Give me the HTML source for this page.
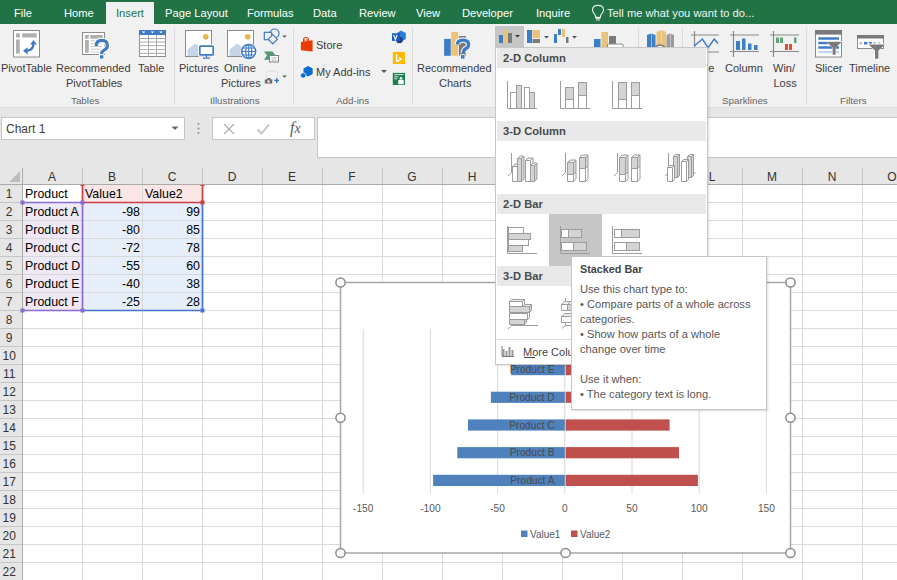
<!DOCTYPE html>
<html><head><meta charset="utf-8">
<style>
*{margin:0;padding:0;box-sizing:border-box}
html,body{width:897px;height:580px;overflow:hidden;background:#fff;font-family:"Liberation Sans",sans-serif}
.a{position:absolute;white-space:nowrap}
#tabs{position:absolute;left:0;top:0;width:897px;height:24px;background:#217346}
.tab{position:absolute;top:6px;font-size:11.2px;line-height:14px;color:#fff}
#ribbon{position:absolute;left:0;top:24px;width:897px;height:83px;background:#f1f1f1}
.rt{position:absolute;font-size:11px;line-height:14px;color:#3c3c3c;white-space:nowrap}
.gl{position:absolute;top:94px;font-size:9.8px;line-height:13px;color:#666;white-space:nowrap}
.sep{position:absolute;top:28px;width:1px;height:76px;background:#dadada}
#fbar{position:absolute;left:0;top:107px;width:897px;height:61px;background:#e6e6e6}
.cell{position:absolute;font-size:12px;line-height:17px;color:#000;white-space:nowrap}
</style></head><body>
<div id="tabs">
 <div style="position:absolute;left:106px;top:2px;width:48px;height:22px;background:#f1f1f1"></div>
 <div class="tab" style="left:14px">File</div>
 <div class="tab" style="left:64px">Home</div>
 <div class="tab" style="left:116px;color:#217346">Insert</div>
 <div class="tab" style="left:165px">Page Layout</div>
 <div class="tab" style="left:247px">Formulas</div>
 <div class="tab" style="left:313px">Data</div>
 <div class="tab" style="left:359px">Review</div>
 <div class="tab" style="left:416px">View</div>
 <div class="tab" style="left:462px">Developer</div>
 <div class="tab" style="left:536px">Inquire</div>
 <svg class="a" style="left:591px;top:4px" width="14" height="18" viewBox="0 0 14 18"><path d="M4.8 13.5 q-0.2 -2.5 -1.8 -4.2 q-1.5 -1.7 -1.5 -3.6 q0 -4.3 5.5 -4.3 q5.5 0 5.5 4.3 q0 1.9 -1.5 3.6 q-1.6 1.7 -1.8 4.2z" fill="none" stroke="#e8efe9" stroke-width="1.1"/><rect x="4.6" y="12.8" width="4.8" height="2" fill="#fff"/><path d="M5.2 16h3.6" stroke="#e8efe9" stroke-width="1"/></svg>
 <div class="tab" style="left:607px;color:#eef4f0">Tell me what you want to do...</div>
</div>
<div id="ribbon"></div>
<!-- separators -->
<div class="sep" style="left:174px"></div>
<div class="sep" style="left:293px"></div>
<div class="sep" style="left:412px"></div>
<div class="sep" style="left:638px"></div>
<div class="sep" style="left:682px"></div>
<div class="sep" style="left:806px"></div>
<!-- Tables group -->
<svg class="a" style="left:12px;top:29px" width="30" height="30" viewBox="0 0 30 30">
 <rect x="1.5" y="1.5" width="26" height="26.5" fill="#fff" stroke="#8c8c8c"/>
 <rect x="4" y="4.3" width="3.8" height="4.2" fill="#b0b0b0"/>
 <rect x="10.2" y="4.3" width="14.5" height="4.2" fill="#b0b0b0"/>
 <rect x="4" y="10.4" width="3.8" height="14.2" fill="#b0b0b0"/>
 <path d="M14 21.8 q7.5 0 7.5 -8" fill="none" stroke="#3e7bc4" stroke-width="2.3"/>
 <path d="M21.5 11 l-3.4 4.6 h6.8z" fill="#3e7bc4"/>
 <path d="M11 21.8 l4.6 -3.6 v7.2z" fill="#3e7bc4"/>
</svg>
<svg class="a" style="left:76px;top:26px" width="40" height="36" viewBox="76 26 40 36">
 <rect x="82.5" y="32.5" width="22" height="22" fill="#fff" stroke="#8c8c8c"/>
 <rect x="85" y="35" width="3.8" height="3.7" fill="#b0b0b0"/>
 <rect x="90.2" y="35" width="12.5" height="3.7" fill="#b0b0b0"/>
 <rect x="85" y="40" width="3.8" height="12.7" fill="#b0b0b0"/>
 <path d="M91 40.8h11M91 43.6h11M91 46.4h11M91 49.2h11M91 52h11" stroke="#c8c8c8" stroke-width="1"/>
 <path d="M96.2 46 q0 -5.6 5.6 -5.6 q5.6 0 5.6 5 q0 2.8 -2.6 4.2 q-3.2 1.6 -3.2 4.4" fill="none" stroke="#fff" stroke-width="5.5"/>
 <rect x="98.9" y="54.2" width="5.4" height="5.4" fill="#fff"/>
 <path d="M96.2 46 q0 -5.6 5.6 -5.6 q5.6 0 5.6 5 q0 2.8 -2.6 4.2 q-3.2 1.6 -3.2 4.4" fill="none" stroke="#3e7bc4" stroke-width="3.2"/>
 <rect x="100" y="55.2" width="3.4" height="3.4" fill="#3e7bc4"/>
</svg>
<svg class="a" style="left:132px;top:26px" width="40" height="36" viewBox="132 26 40 36">
 <rect x="139.5" y="30.5" width="26" height="26" fill="#fff" stroke="#8c8c8c"/>
 <rect x="139" y="30" width="27" height="5" fill="#3e7bc4"/>
 <path d="M141.8 31.4h3.6l-1.8 1.8zM150.7 31.4h3.6l-1.8 1.8zM159.2 31.4h3.6l-1.8 1.8z" fill="#fff"/>
 <path d="M139 38.5h27M139 42h27M139 45.7h27M139 49.6h27M139 53.3h27M148.5 35v22M156.5 35v22" stroke="#a8a8a8" stroke-width="1"/>
</svg>
<div class="rt" style="left:1px;top:61px">PivotTable</div>
<div class="rt" style="left:56px;top:61px">Recommended</div>
<div class="rt" style="left:66px;top:76px">PivotTables</div>
<div class="rt" style="left:138px;top:61px">Table</div>
<div class="gl" style="left:71px">Tables</div>
<!-- Illustrations -->
<svg class="a" style="left:180px;top:26px" width="40" height="36" viewBox="180 26 40 36">
 <rect x="185.5" y="30.5" width="26" height="26" fill="#fff" stroke="#8c8c8c"/>
 <circle cx="205.8" cy="36.7" r="2.8" fill="#e8b44c"/>
 <path d="M187.5 56 V49.8 L194.3 44 H196.2 L200 47.5 V56z" fill="#c5d6ea"/>
 <rect x="198" y="44.3" width="17" height="12.4" rx="1.5" fill="#fff"/>
 <rect x="199.8" y="46.1" width="13.4" height="8.8" rx="1" fill="#fff" stroke="#3e7bc4" stroke-width="1.7"/>
 <path d="M206.5 55v2.3M203 58.2h7" stroke="#3e7bc4" stroke-width="1.3"/>
</svg>
<svg class="a" style="left:222px;top:26px" width="40" height="36" viewBox="222 26 40 36">
 <rect x="227.5" y="30.5" width="26" height="26" fill="#fff" stroke="#8c8c8c"/>
 <circle cx="247.8" cy="36.7" r="2.8" fill="#e8b44c"/>
 <path d="M229.5 56 V49.8 L236.3 44 H238.2 L242 47.5 V56z" fill="#c5d6ea"/>
 <circle cx="248.7" cy="51.5" r="8.3" fill="#fff"/>
 <circle cx="248.7" cy="51.5" r="7" fill="#fff" stroke="#3e7bc4" stroke-width="1.5"/>
 <ellipse cx="248.7" cy="51.5" rx="3" ry="7" fill="none" stroke="#3e7bc4" stroke-width="1.2"/>
 <path d="M241.7 51.5h14M242.6 48h12.2M242.6 55h12.2M248.7 44.5v14" stroke="#3e7bc4" stroke-width="1.1"/>
</svg>
<svg class="a" style="left:260px;top:26px" width="32" height="60" viewBox="260 26 32 60">
 <circle cx="274.6" cy="33.4" r="4.4" fill="none" stroke="#3e7bc4" stroke-width="1.2"/>
 <rect x="264.3" y="32.3" width="7.4" height="7.4" fill="#f1f1f1" stroke="#3e7bc4" stroke-width="1.2"/>
 <path d="M272.8 34.6 l4.6 4.6 l-4.6 4.6 l-4.6 -4.6z" fill="#f1f1f1" stroke="#3e7bc4" stroke-width="1.2"/>
 <path d="M282.2 35.5h4.6l-2.3 2.3z" fill="#555"/>
 <path d="M264 51.5 h8.5 l3 4 l-3 4.2 h-8.5 l3 -4.2z" fill="#4e9a73"/>
 <rect x="269.5" y="55.5" width="9" height="6.5" fill="#fff" stroke="#808080"/>
 <path d="M271.5 58h5M271.5 60.2h5" stroke="#999" stroke-width="0.8"/>
 <rect x="266.5" y="71" width="11" height="9" fill="none" stroke="#c4c4c4" stroke-width="0.8" stroke-dasharray="1 1"/>
 <path d="M264.8 79.5h2l1 -1.5h2l1 1.5h1.4v4.1h-7.4z" fill="#6a6a6a"/>
 <circle cx="268.5" cy="81.5" r="1.2" fill="#f1f1f1"/>
 <path d="M274.4 80.6h4.6M276.7 78.3v4.6" stroke="#3e7bc4" stroke-width="1.5"/>
 <path d="M282.2 75.5h4.6l-2.3 2.3z" fill="#555"/>
</svg>
<div class="rt" style="left:179px;top:61px">Pictures</div>
<div class="rt" style="left:224px;top:61px">Online</div>
<div class="rt" style="left:221px;top:76px">Pictures</div>
<div class="gl" style="left:210px">Illustrations</div>
<!-- Add-ins -->
<svg class="a" style="left:296px;top:30px" width="24" height="52" viewBox="296 30 24 52">
 <path d="M300.9 42 L312.6 40.3 V51.6 L300.9 50.3z" fill="#eb3c00"/>
 <path d="M303.6 42 v-2.6 q0 -1.9 2.4 -1.9 q2.4 0 2.4 1.9 v2.4" fill="none" stroke="#eb3c00" stroke-width="1.2"/>
 <path d="M304.8 41.5 v-2 M307 41.2 v-2" stroke="#eb3c00" stroke-width="0.8"/>
 <path d="M308.1 66 L312.7 68.6 V74 L308.1 76.6 L303.5 74 V68.6z" fill="#0a6ccc"/>
 <circle cx="303.2" cy="75.4" r="2.7" fill="#0a6ccc" stroke="#f1f1f1" stroke-width="0.8"/>
</svg>
<div class="rt" style="left:316px;top:38px">Store</div>
<div class="rt" style="left:316px;top:65px">My Add-ins</div>
<svg class="a" style="left:380px;top:70px" width="8" height="4" viewBox="0 0 8 4"><path d="M1 0h6l-3 3z" fill="#555"/></svg>
<svg class="a" style="left:386px;top:26px" width="26" height="64" viewBox="386 26 26 64">
 <path d="M397 33 l4 -2.5 l4.8 2.6 v6 l-4.8 2.6 l-4 -2.5z" fill="#2b7cd3"/>
 <circle cx="399.5" cy="40" r="3.3" fill="#1a3f8c"/>
 <rect x="392" y="33.3" width="8" height="7.6" fill="#185abd"/>
 <path d="M393.6 34.8 l1.8 4.8 l1.8 -4.8" fill="none" stroke="#fff" stroke-width="1.1"/>
 <rect x="392.8" y="51.9" width="12.2" height="12.1" fill="#ffb900"/>
 <path d="M396.6 54 v7.5 l5 -2.4 l-2.8 -1.6" fill="none" stroke="#fff" stroke-width="1.4" stroke-linejoin="bevel"/>
 <rect x="392.8" y="72.9" width="12.2" height="12.1" fill="#1a7f4b"/>
 <path d="M394.2 74.6h9.4M394.2 76.8h4M394.2 78.8h3" stroke="#e6f2ea" stroke-width="0.9"/>
 <circle cx="401" cy="78.2" r="1.3" fill="#fff"/>
 <path d="M398.2 84.2 v-3.2 q0 -1.2 1.2 -1.2 h3.2 q1.2 0 1.2 1.2 v3.2z" fill="#fff"/>
</svg>
<div class="gl" style="left:336px">Add-ins</div>
<!-- Recommended charts -->
<svg class="a" style="left:430px;top:24px" width="50" height="38" viewBox="430 24 50 38">
 <rect x="444.1" y="38.9" width="6.7" height="16.9" fill="#3e7bc4"/>
 <rect x="451.3" y="31.9" width="6.9" height="23.9" fill="#eac37a"/>
 <rect x="459" y="36" width="7" height="2" fill="#7a7a7a"/>
 <rect x="459" y="41" width="7" height="14.8" fill="#7a7a7a"/>
 <path d="M457.4 44.5 q0 -4.4 5.6 -4.4 q5.6 0 5.6 4.4 q0 2.6 -2.6 4 q-2.6 1.4 -2.6 4.4" fill="none" stroke="#f1f1f1" stroke-width="5.5"/>
 <rect x="460" y="54.2" width="5.4" height="5.4" fill="#f1f1f1"/>
 <path d="M457.4 44.5 q0 -4.4 5.6 -4.4 q5.6 0 5.6 4.4 q0 2.6 -2.6 4 q-2.6 1.4 -2.6 4.4" fill="none" stroke="#3e7bc4" stroke-width="3.3"/>
 <rect x="461" y="55.1" width="3.5" height="3.5" fill="#3e7bc4"/>
</svg>
<div class="rt" style="left:417px;top:61px">Recommended</div>
<div class="rt" style="left:439px;top:76px">Charts</div>
<!-- chart buttons row -->
<div class="a" style="left:495px;top:26px;width:29px;height:21px;background:#c6c6c6"></div>
<svg class="a" style="left:497px;top:27px" width="140" height="20" viewBox="0 0 140 20">
 <rect x="2" y="8" width="4" height="8" fill="#3d7fc4"/>
 <rect x="6.5" y="3" width="4" height="13" fill="#eac37a"/>
 <rect x="11" y="6" width="4" height="10" fill="#7a7a7a"/>
 <path d="M18 8h5l-2.5 2.5z" fill="#333"/>
 <rect x="30" y="3" width="5" height="13" fill="#3d7fc4"/>
 <rect x="35.5" y="3" width="7.5" height="8" fill="#eac37a"/>
 <rect x="35.5" y="12" width="7.5" height="4" fill="#7a7a7a"/>
 <path d="M47 9h5l-2.5 2.5z" fill="#555"/>
 <rect x="57" y="7" width="3" height="9" fill="#3d7fc4"/>
 <rect x="61" y="2" width="3" height="6" fill="#3d7fc4"/>
 <rect x="65" y="2" width="3" height="8" fill="#eac37a"/>
 <rect x="69" y="10" width="2.5" height="6" fill="#7a7a7a"/>
 <path d="M75 9h5l-2.5 2.5z" fill="#555"/>
 <rect x="97" y="12" width="6.5" height="9" fill="#3d7fc4"/>
 <rect x="104.5" y="5" width="6.5" height="16" fill="#eac37a"/>
 <rect x="112" y="9" width="7" height="8" fill="#7a7a7a"/>
 <rect x="110.5" y="17" width="15.5" height="6" rx="1" fill="#fff" stroke="#8a8a8a"/>
</svg>
<svg class="a" style="left:645px;top:29px" width="30" height="20" viewBox="0 0 30 20">
 <path d="M2 6 l4 -1.5 v14 h-4z M6.5 4.5 l4 1.5 v13 h-4z" fill="#3d7fc4"/>
 <path d="M11.5 3 l4.5 -2 v18 h-4.5z M16.5 1 l4.5 2 v16 h-4.5z" fill="#eac37a"/>
 <path d="M21.5 6 l3.5 -1.5 v14 h-3.5z M25.5 4.5 l3.5 1.5 v13 h-3.5z" fill="#9a9a9a"/>
 <path d="M9 19 q6 -6 12 0" fill="#fff" stroke="#777" stroke-width="1.2"/>
</svg>
<!-- Sparklines -->
<svg class="a" style="left:688px;top:29px" width="120" height="30" viewBox="0 0 120 30">
 <path d="M3 6h28M3 23h28M6.5 2v26" stroke="#8a8a8a" stroke-width="1.2"/>
 <path d="M6.2 17 L14.4 10 L20.1 18.6 L26.3 10 L30 14.5" fill="none" stroke="#3e7bc4" stroke-width="1.5"/>
 <path d="M42 6h29M42 22.5h29M45.5 2v26" stroke="#8a8a8a" stroke-width="1.2"/>
 <rect x="48" y="12" width="4" height="9" fill="#3d7fc4"/>
 <rect x="54" y="9.5" width="3.5" height="11.5" fill="#3d7fc4"/>
 <rect x="60" y="14.5" width="3.5" height="6.5" fill="#3d7fc4"/>
 <rect x="66" y="16" width="3.5" height="5" fill="#3d7fc4"/>
 <path d="M82 6h29M82 22.5h29M85.5 2v26" stroke="#8a8a8a" stroke-width="1.2"/>
 <rect x="88" y="8.5" width="3" height="5.5" fill="#5fa47e"/>
 <rect x="92" y="8.5" width="3" height="5.5" fill="#5fa47e"/>
 <rect x="106" y="8.5" width="2.5" height="5.5" fill="#5fa47e"/>
 <rect x="97" y="15" width="3" height="6" fill="#e0502a"/>
 <rect x="101" y="15" width="3" height="6" fill="#e0502a"/>
</svg>
<div class="rt" style="left:693.5px;top:61px">Line</div>
<div class="rt" style="left:725px;top:61px">Column</div>
<div class="rt" style="left:773px;top:61px">Win/</div>
<div class="rt" style="left:773.5px;top:76px">Loss</div>
<div class="gl" style="left:722px">Sparklines</div>
<!-- Filters -->
<svg class="a" style="left:810px;top:26px" width="80" height="36" viewBox="810 26 80 36">
 <rect x="815.5" y="30.5" width="26" height="26.5" fill="#fff" stroke="#8a8a8a"/>
 <rect x="815" y="30" width="27" height="4.6" fill="#7a7a7a"/>
 <path d="M818.3 38.5h20.7M818.3 43.1h20.7M818.3 47.6h20.7" stroke="#3e7bc4" stroke-width="2.5"/>
 <path d="M818.3 52h20.7" stroke="#c5d6ea" stroke-width="2.5"/>
 <path d="M825.5 41 h17 l-6.6 6.6 v8 h-3.8 v-8z" fill="#fff"/>
 <path d="M826.6 41.8 h15 l-6 6 v7 h-3 v-7z" fill="#7a7a7a"/>
 <rect x="857.5" y="35.5" width="26" height="13" fill="#fff" stroke="#8a8a8a"/>
 <rect x="857" y="35" width="27" height="3.5" fill="#7a7a7a"/>
 <path d="M859.5 43.2h2.5M873 43.2h3M878 43.2h2.5" stroke="#bdbdbd" stroke-width="2.5"/>
 <path d="M864 43.2h3.5M869 43.2h3" stroke="#3e7bc4" stroke-width="2.5"/>
 <path d="M867.5 43.5 h18.5 l-7.3 6.6 v9.5 h-5 v-9.5z" fill="#fff"/>
 <path d="M868.5 44.4 h16.5 l-6.6 6 v8.4 h-3.4 v-8.4z" fill="#7a7a7a"/>
</svg>
<div class="rt" style="left:815px;top:61px">Slicer</div>
<div class="rt" style="left:849px;top:61px">Timeline</div>
<div class="gl" style="left:840px">Filters</div>
<!--SHEET-->
<div id="fbar"></div>
<div class="a" style="left:0;top:107px;width:897px;height:1px;background:#dcdcdc"></div>
<div class="a" style="left:1px;top:117px;width:184px;height:23px;background:#fff;border:1px solid #c6c6c6"></div>
<div class="cell" style="left:6px;top:121px;color:#404040">Chart 1</div>
<svg class="a" style="left:171px;top:126px" width="8" height="5"><path d="M0.5 0.5h7l-3.5 3.5z" fill="#666"/></svg>
<svg class="a" style="left:196px;top:122px" width="5" height="13"><circle cx="2.5" cy="2" r="1.1" fill="#999"/><circle cx="2.5" cy="6.5" r="1.1" fill="#999"/><circle cx="2.5" cy="11" r="1.1" fill="#999"/></svg>
<div class="a" style="left:212px;top:117px;width:103px;height:23px;background:#fff;border:1px solid #c6c6c6"></div>
<svg class="a" style="left:222px;top:122px" width="14" height="14"><path d="M2 2l10 10M12 2L2 12" stroke="#b0b0b0" stroke-width="1.2"/></svg>
<svg class="a" style="left:256px;top:122px" width="14" height="14"><path d="M1.5 7.5l4 4l7.5 -9" fill="none" stroke="#c2c2c2" stroke-width="1.8"/></svg>
<div class="a" style="left:290px;top:119px;font-family:'Liberation Serif',serif;font-style:italic;font-size:16px;line-height:18px;color:#5a5a5a">f<span style="font-size:14px">x</span></div>
<div class="a" style="left:317px;top:117px;width:590px;height:41px;background:#fff;border:1px solid #c6c6c6"></div>
<svg class="a" style="left:0;top:168px" width="897" height="412" viewBox="0 168 897 412">
<rect x="0" y="168" width="897" height="17" fill="#e6e6e6"/>
<rect x="0" y="185" width="22" height="395" fill="#e6e6e6"/>
<rect x="22" y="185" width="875" height="395" fill="#fff"/>
<path d="M82.5 185V580" stroke="#dadada"/>
<path d="M142.5 185V580" stroke="#dadada"/>
<path d="M202.5 185V580" stroke="#dadada"/>
<path d="M262.5 185V580" stroke="#dadada"/>
<path d="M322.5 185V580" stroke="#dadada"/>
<path d="M382.5 185V580" stroke="#dadada"/>
<path d="M442.5 185V580" stroke="#dadada"/>
<path d="M502.5 185V580" stroke="#dadada"/>
<path d="M562.5 185V580" stroke="#dadada"/>
<path d="M622.5 185V580" stroke="#dadada"/>
<path d="M682.5 185V580" stroke="#dadada"/>
<path d="M742.5 185V580" stroke="#dadada"/>
<path d="M802.5 185V580" stroke="#dadada"/>
<path d="M862.5 185V580" stroke="#dadada"/>
<path d="M22 202.5H897" stroke="#dadada"/>
<path d="M22 220.5H897" stroke="#dadada"/>
<path d="M22 238.5H897" stroke="#dadada"/>
<path d="M22 256.5H897" stroke="#dadada"/>
<path d="M22 274.5H897" stroke="#dadada"/>
<path d="M22 292.5H897" stroke="#dadada"/>
<path d="M22 310.5H897" stroke="#dadada"/>
<path d="M22 328.5H897" stroke="#dadada"/>
<path d="M22 346.5H897" stroke="#dadada"/>
<path d="M22 364.5H897" stroke="#dadada"/>
<path d="M22 382.5H897" stroke="#dadada"/>
<path d="M22 400.5H897" stroke="#dadada"/>
<path d="M22 418.5H897" stroke="#dadada"/>
<path d="M22 436.5H897" stroke="#dadada"/>
<path d="M22 454.5H897" stroke="#dadada"/>
<path d="M22 472.5H897" stroke="#dadada"/>
<path d="M22 490.5H897" stroke="#dadada"/>
<path d="M22 508.5H897" stroke="#dadada"/>
<path d="M22 526.5H897" stroke="#dadada"/>
<path d="M22 544.5H897" stroke="#dadada"/>
<path d="M22 562.5H897" stroke="#dadada"/>
<path d="M22 580.5H897" stroke="#dadada"/>
<path d="M22.5 168V184" stroke="#c6c6c6"/>
<path d="M82.5 168V184" stroke="#c6c6c6"/>
<path d="M142.5 168V184" stroke="#c6c6c6"/>
<path d="M202.5 168V184" stroke="#c6c6c6"/>
<path d="M262.5 168V184" stroke="#c6c6c6"/>
<path d="M322.5 168V184" stroke="#c6c6c6"/>
<path d="M382.5 168V184" stroke="#c6c6c6"/>
<path d="M442.5 168V184" stroke="#c6c6c6"/>
<path d="M502.5 168V184" stroke="#c6c6c6"/>
<path d="M562.5 168V184" stroke="#c6c6c6"/>
<path d="M622.5 168V184" stroke="#c6c6c6"/>
<path d="M682.5 168V184" stroke="#c6c6c6"/>
<path d="M742.5 168V184" stroke="#c6c6c6"/>
<path d="M802.5 168V184" stroke="#c6c6c6"/>
<path d="M862.5 168V184" stroke="#c6c6c6"/>
<path d="M0 202.5H22" stroke="#c6c6c6"/>
<path d="M0 220.5H22" stroke="#c6c6c6"/>
<path d="M0 238.5H22" stroke="#c6c6c6"/>
<path d="M0 256.5H22" stroke="#c6c6c6"/>
<path d="M0 274.5H22" stroke="#c6c6c6"/>
<path d="M0 292.5H22" stroke="#c6c6c6"/>
<path d="M0 310.5H22" stroke="#c6c6c6"/>
<path d="M0 328.5H22" stroke="#c6c6c6"/>
<path d="M0 346.5H22" stroke="#c6c6c6"/>
<path d="M0 364.5H22" stroke="#c6c6c6"/>
<path d="M0 382.5H22" stroke="#c6c6c6"/>
<path d="M0 400.5H22" stroke="#c6c6c6"/>
<path d="M0 418.5H22" stroke="#c6c6c6"/>
<path d="M0 436.5H22" stroke="#c6c6c6"/>
<path d="M0 454.5H22" stroke="#c6c6c6"/>
<path d="M0 472.5H22" stroke="#c6c6c6"/>
<path d="M0 490.5H22" stroke="#c6c6c6"/>
<path d="M0 508.5H22" stroke="#c6c6c6"/>
<path d="M0 526.5H22" stroke="#c6c6c6"/>
<path d="M0 544.5H22" stroke="#c6c6c6"/>
<path d="M0 562.5H22" stroke="#c6c6c6"/>
<path d="M0 580.5H22" stroke="#c6c6c6"/>
<path d="M0 184.5H897" stroke="#ababab"/>
<path d="M22.5 168V580" stroke="#ababab"/>
<path d="M9 182h11v-11z" fill="#bdbdbd"/>
<text x="52" y="181" text-anchor="middle" font-size="12" fill="#333" font-family="Liberation Sans">A</text>
<text x="112" y="181" text-anchor="middle" font-size="12" fill="#333" font-family="Liberation Sans">B</text>
<text x="172" y="181" text-anchor="middle" font-size="12" fill="#333" font-family="Liberation Sans">C</text>
<text x="232" y="181" text-anchor="middle" font-size="12" fill="#333" font-family="Liberation Sans">D</text>
<text x="292" y="181" text-anchor="middle" font-size="12" fill="#333" font-family="Liberation Sans">E</text>
<text x="352" y="181" text-anchor="middle" font-size="12" fill="#333" font-family="Liberation Sans">F</text>
<text x="412" y="181" text-anchor="middle" font-size="12" fill="#333" font-family="Liberation Sans">G</text>
<text x="472" y="181" text-anchor="middle" font-size="12" fill="#333" font-family="Liberation Sans">H</text>
<text x="532" y="181" text-anchor="middle" font-size="12" fill="#333" font-family="Liberation Sans">I</text>
<text x="592" y="181" text-anchor="middle" font-size="12" fill="#333" font-family="Liberation Sans">J</text>
<text x="652" y="181" text-anchor="middle" font-size="12" fill="#333" font-family="Liberation Sans">K</text>
<text x="712" y="181" text-anchor="middle" font-size="12" fill="#333" font-family="Liberation Sans">L</text>
<text x="772" y="181" text-anchor="middle" font-size="12" fill="#333" font-family="Liberation Sans">M</text>
<text x="832" y="181" text-anchor="middle" font-size="12" fill="#333" font-family="Liberation Sans">N</text>
<text x="892" y="181" text-anchor="middle" font-size="12" fill="#333" font-family="Liberation Sans">O</text>
<text x="9.2" y="198" text-anchor="middle" font-size="12" fill="#333" font-family="Liberation Sans">1</text>
<text x="9.2" y="216" text-anchor="middle" font-size="12" fill="#333" font-family="Liberation Sans">2</text>
<text x="9.2" y="234" text-anchor="middle" font-size="12" fill="#333" font-family="Liberation Sans">3</text>
<text x="9.2" y="252" text-anchor="middle" font-size="12" fill="#333" font-family="Liberation Sans">4</text>
<text x="9.2" y="270" text-anchor="middle" font-size="12" fill="#333" font-family="Liberation Sans">5</text>
<text x="9.2" y="288" text-anchor="middle" font-size="12" fill="#333" font-family="Liberation Sans">6</text>
<text x="9.2" y="306" text-anchor="middle" font-size="12" fill="#333" font-family="Liberation Sans">7</text>
<text x="9.2" y="324" text-anchor="middle" font-size="12" fill="#333" font-family="Liberation Sans">8</text>
<text x="9.2" y="342" text-anchor="middle" font-size="12" fill="#333" font-family="Liberation Sans">9</text>
<text x="9.2" y="360" text-anchor="middle" font-size="12" fill="#333" font-family="Liberation Sans">10</text>
<text x="9.2" y="378" text-anchor="middle" font-size="12" fill="#333" font-family="Liberation Sans">11</text>
<text x="9.2" y="396" text-anchor="middle" font-size="12" fill="#333" font-family="Liberation Sans">12</text>
<text x="9.2" y="414" text-anchor="middle" font-size="12" fill="#333" font-family="Liberation Sans">13</text>
<text x="9.2" y="432" text-anchor="middle" font-size="12" fill="#333" font-family="Liberation Sans">14</text>
<text x="9.2" y="450" text-anchor="middle" font-size="12" fill="#333" font-family="Liberation Sans">15</text>
<text x="9.2" y="468" text-anchor="middle" font-size="12" fill="#333" font-family="Liberation Sans">16</text>
<text x="9.2" y="486" text-anchor="middle" font-size="12" fill="#333" font-family="Liberation Sans">17</text>
<text x="9.2" y="504" text-anchor="middle" font-size="12" fill="#333" font-family="Liberation Sans">18</text>
<text x="9.2" y="522" text-anchor="middle" font-size="12" fill="#333" font-family="Liberation Sans">19</text>
<text x="9.2" y="540" text-anchor="middle" font-size="12" fill="#333" font-family="Liberation Sans">20</text>
<text x="9.2" y="558" text-anchor="middle" font-size="12" fill="#333" font-family="Liberation Sans">21</text>
<text x="9.2" y="576" text-anchor="middle" font-size="12" fill="#333" font-family="Liberation Sans">22</text>
</svg>
<div class="a" style="left:83px;top:185px;width:119px;height:17px;background:#fbe6e6"></div>
<div class="a" style="left:23px;top:203px;width:59px;height:107px;background:#eee9f5"></div>
<div class="a" style="left:83px;top:203px;width:119px;height:107px;background:#e6eef9"></div>
<div class="a" style="left:23px;top:220px;width:179px;height:1px;background:#d8d8d8"></div>
<div class="a" style="left:23px;top:238px;width:179px;height:1px;background:#d8d8d8"></div>
<div class="a" style="left:23px;top:256px;width:179px;height:1px;background:#d8d8d8"></div>
<div class="a" style="left:23px;top:274px;width:179px;height:1px;background:#d8d8d8"></div>
<div class="a" style="left:23px;top:292px;width:179px;height:1px;background:#d8d8d8"></div>
<div class="a" style="left:142px;top:185px;width:1px;height:125px;background:#d8d8d8"></div>
<div class="cell" style="left:25px;top:186px;font-size:12.4px">Product</div>
<div class="cell" style="left:85px;top:186px;font-size:12.4px">Value1</div>
<div class="cell" style="left:145px;top:186px;font-size:12.4px">Value2</div>
<div class="cell" style="left:25px;top:204px;font-size:12.4px">Product A</div>
<div class="cell" style="left:82px;top:204px;width:58px;text-align:right;font-size:12.4px">-98</div>
<div class="cell" style="left:142px;top:204px;width:58px;text-align:right;font-size:12.4px">99</div>
<div class="cell" style="left:25px;top:222px;font-size:12.4px">Product B</div>
<div class="cell" style="left:82px;top:222px;width:58px;text-align:right;font-size:12.4px">-80</div>
<div class="cell" style="left:142px;top:222px;width:58px;text-align:right;font-size:12.4px">85</div>
<div class="cell" style="left:25px;top:240px;font-size:12.4px">Product C</div>
<div class="cell" style="left:82px;top:240px;width:58px;text-align:right;font-size:12.4px">-72</div>
<div class="cell" style="left:142px;top:240px;width:58px;text-align:right;font-size:12.4px">78</div>
<div class="cell" style="left:25px;top:258px;font-size:12.4px">Product D</div>
<div class="cell" style="left:82px;top:258px;width:58px;text-align:right;font-size:12.4px">-55</div>
<div class="cell" style="left:142px;top:258px;width:58px;text-align:right;font-size:12.4px">60</div>
<div class="cell" style="left:25px;top:276px;font-size:12.4px">Product E</div>
<div class="cell" style="left:82px;top:276px;width:58px;text-align:right;font-size:12.4px">-40</div>
<div class="cell" style="left:142px;top:276px;width:58px;text-align:right;font-size:12.4px">38</div>
<div class="cell" style="left:25px;top:294px;font-size:12.4px">Product F</div>
<div class="cell" style="left:82px;top:294px;width:58px;text-align:right;font-size:12.4px">-25</div>
<div class="cell" style="left:142px;top:294px;width:58px;text-align:right;font-size:12.4px">28</div>
<svg class="a" style="left:0;top:170px" width="220" height="150" viewBox="0 170 220 150">
<path d="M202.5 310.5H82.5" stroke="#4474d6" stroke-width="1.7" fill="none"/>
<path d="M202.5 202.5V310.5" stroke="#4474d6" stroke-width="1.7" fill="none"/>
<path d="M82.5 185V202.5H202.5V185" stroke="#cf3d47" stroke-width="1.7" fill="none"/>
<path d="M22.5 202.5H82.5V310.5H22.5" stroke="#8a6cd0" stroke-width="1.7" fill="none"/>
<rect x="20.5" y="200.5" width="4" height="4" fill="#8a6cd0"/>
<rect x="80.5" y="200.5" width="4" height="4" fill="#8a6cd0"/>
<rect x="20.5" y="308.5" width="4" height="4" fill="#8a6cd0"/>
<rect x="80.5" y="308.5" width="4" height="4" fill="#8a6cd0"/>
<rect x="200.5" y="200.5" width="4" height="4" fill="#cf3d47"/>
<rect x="200.5" y="308.5" width="4" height="4" fill="#4474d6"/>
<rect x="80.5" y="184.8" width="4" height="1.2" fill="#cf3d47"/>
<rect x="200.5" y="184.8" width="4" height="1.2" fill="#cf3d47"/>
</svg>
<!--/SHEET-->
<!--CHART-->
<div class="a" style="left:340px;top:282px;width:451px;height:271px;background:#fff"></div>
<svg class="a" style="left:330px;top:272px" width="471" height="291" viewBox="330 272 471 291">
<path d="M363.2 329V494" stroke="#d9d9d9" stroke-width="1"/>
<text x="363.2" y="512" text-anchor="middle" font-size="10.2" fill="#595959" font-family="Liberation Sans">-150</text>
<path d="M430.4 329V494" stroke="#d9d9d9" stroke-width="1"/>
<text x="430.4" y="512" text-anchor="middle" font-size="10.2" fill="#595959" font-family="Liberation Sans">-100</text>
<path d="M497.6 329V494" stroke="#d9d9d9" stroke-width="1"/>
<text x="497.6" y="512" text-anchor="middle" font-size="10.2" fill="#595959" font-family="Liberation Sans">-50</text>
<path d="M564.8 329V494" stroke="#d9d9d9" stroke-width="1"/>
<text x="564.8" y="512" text-anchor="middle" font-size="10.2" fill="#595959" font-family="Liberation Sans">0</text>
<path d="M632.0 329V494" stroke="#d9d9d9" stroke-width="1"/>
<text x="632.0" y="512" text-anchor="middle" font-size="10.2" fill="#595959" font-family="Liberation Sans">50</text>
<path d="M699.2 329V494" stroke="#d9d9d9" stroke-width="1"/>
<text x="699.2" y="512" text-anchor="middle" font-size="10.2" fill="#595959" font-family="Liberation Sans">100</text>
<path d="M766.4 329V494" stroke="#d9d9d9" stroke-width="1"/>
<text x="766.4" y="512" text-anchor="middle" font-size="10.2" fill="#595959" font-family="Liberation Sans">150</text>
<rect x="433.1" y="474.8" width="131.7" height="11.2" fill="#4f81bd"/>
<rect x="565.6" y="474.8" width="132.3" height="11.2" fill="#c0504d"/>
<text x="554.5" y="484.1" text-anchor="end" font-size="10.2" fill="#4a4a4a" font-family="Liberation Sans">Product A</text>
<rect x="457.3" y="447.1" width="107.5" height="11.2" fill="#4f81bd"/>
<rect x="565.6" y="447.1" width="113.4" height="11.2" fill="#c0504d"/>
<text x="554.5" y="456.4" text-anchor="end" font-size="10.2" fill="#4a4a4a" font-family="Liberation Sans">Product B</text>
<rect x="468.0" y="419.4" width="96.8" height="11.2" fill="#4f81bd"/>
<rect x="565.6" y="419.4" width="104.0" height="11.2" fill="#c0504d"/>
<text x="554.5" y="428.7" text-anchor="end" font-size="10.2" fill="#4a4a4a" font-family="Liberation Sans">Product C</text>
<rect x="490.9" y="391.7" width="73.9" height="11.2" fill="#4f81bd"/>
<rect x="565.6" y="391.7" width="79.8" height="11.2" fill="#c0504d"/>
<text x="554.5" y="401.0" text-anchor="end" font-size="10.2" fill="#4a4a4a" font-family="Liberation Sans">Product D</text>
<rect x="511.0" y="364.0" width="53.8" height="11.2" fill="#4f81bd"/>
<rect x="565.6" y="364.0" width="50.3" height="11.2" fill="#c0504d"/>
<text x="554.5" y="373.3" text-anchor="end" font-size="10.2" fill="#4a4a4a" font-family="Liberation Sans">Product E</text>
<rect x="531.2" y="336.3" width="33.6" height="11.2" fill="#4f81bd"/>
<rect x="565.6" y="336.3" width="36.8" height="11.2" fill="#c0504d"/>
<text x="554.5" y="345.6" text-anchor="end" font-size="10.2" fill="#4a4a4a" font-family="Liberation Sans">Product F</text>
<rect x="521" y="530.5" width="6.5" height="6.5" fill="#4f81bd"/>
<text x="530" y="537.5" font-size="10" fill="#595959" font-family="Liberation Sans">Value1</text>
<rect x="571" y="530.5" width="6.5" height="6.5" fill="#c0504d"/>
<text x="580" y="537.5" font-size="10" fill="#595959" font-family="Liberation Sans">Value2</text>
<rect x="340.5" y="282.5" width="450" height="270.5" fill="none" stroke="#a6a6a6" stroke-width="1.5"/>
<circle cx="340.5" cy="282.5" r="4.6" fill="#fff" stroke="#8c8c8c" stroke-width="1.5"/>
<circle cx="565.5" cy="282.5" r="4.6" fill="#fff" stroke="#8c8c8c" stroke-width="1.5"/>
<circle cx="790.5" cy="282.5" r="4.6" fill="#fff" stroke="#8c8c8c" stroke-width="1.5"/>
<circle cx="340.5" cy="417.75" r="4.6" fill="#fff" stroke="#8c8c8c" stroke-width="1.5"/>
<circle cx="790.5" cy="417.75" r="4.6" fill="#fff" stroke="#8c8c8c" stroke-width="1.5"/>
<circle cx="340.5" cy="553" r="4.6" fill="#fff" stroke="#8c8c8c" stroke-width="1.5"/>
<circle cx="565.5" cy="553" r="4.6" fill="#fff" stroke="#8c8c8c" stroke-width="1.5"/>
<circle cx="790.5" cy="553" r="4.6" fill="#fff" stroke="#8c8c8c" stroke-width="1.5"/>
</svg>
<!--/CHART-->
<!--PANEL-->
<div class="a" style="left:495px;top:47px;width:213px;height:318px;background:#fff;border:1px solid #c8c8c8;box-shadow:1px 1px 2px rgba(0,0,0,0.12)"></div>
<div class="a" style="left:497px;top:48px;width:209px;height:20px;background:#e9e9e9"></div>
<div class="a" style="left:503px;top:51px;font-size:11.2px;line-height:14px;font-weight:bold;color:#4a4a4a">2-D Column</div>
<div class="a" style="left:497px;top:121px;width:209px;height:20px;background:#e9e9e9"></div>
<div class="a" style="left:503px;top:124px;font-size:11.2px;line-height:14px;font-weight:bold;color:#4a4a4a">3-D Column</div>
<div class="a" style="left:497px;top:194px;width:209px;height:20px;background:#e9e9e9"></div>
<div class="a" style="left:503px;top:197px;font-size:11.2px;line-height:14px;font-weight:bold;color:#4a4a4a">2-D Bar</div>
<div class="a" style="left:497px;top:266px;width:209px;height:20px;background:#e9e9e9"></div>
<div class="a" style="left:503px;top:269px;font-size:11.2px;line-height:14px;font-weight:bold;color:#4a4a4a">3-D Bar</div>
<div class="a" style="left:549px;top:214px;width:53px;height:52px;background:#c6c6c6"></div>
<svg class="a" style="left:495px;top:47px" width="213" height="318" viewBox="495 47 213 318">
<path d="M507.5 81V108.5H537" fill="none" stroke="#9c9c9c" stroke-width="1"/>
<path d="M560.5 81V108.5H590" fill="none" stroke="#9c9c9c" stroke-width="1"/>
<path d="M612.5 81V108.5H642" fill="none" stroke="#9c9c9c" stroke-width="1"/>
<rect x="510.5" y="92.5" width="6" height="16" fill="#fff" stroke="#9c9c9c" stroke-width="1"/>
<rect x="516.5" y="85.5" width="5" height="23" fill="#d4d4d4" stroke="#9c9c9c" stroke-width="1"/>
<rect x="524.5" y="87.5" width="5" height="21" fill="#fff" stroke="#9c9c9c" stroke-width="1"/>
<rect x="529.5" y="92.5" width="5" height="16" fill="#d4d4d4" stroke="#9c9c9c" stroke-width="1"/>
<rect x="565.5" y="87.5" width="8" height="12" fill="#d4d4d4" stroke="#9c9c9c" stroke-width="1"/>
<rect x="565.5" y="99.5" width="8" height="9" fill="#fff" stroke="#9c9c9c" stroke-width="1"/>
<rect x="578.5" y="82.5" width="8" height="13" fill="#d4d4d4" stroke="#9c9c9c" stroke-width="1"/>
<rect x="578.5" y="95.5" width="8" height="13" fill="#fff" stroke="#9c9c9c" stroke-width="1"/>
<rect x="618.5" y="82.5" width="8" height="17" fill="#d4d4d4" stroke="#9c9c9c" stroke-width="1"/>
<rect x="618.5" y="99.5" width="8" height="9" fill="#fff" stroke="#9c9c9c" stroke-width="1"/>
<rect x="631.5" y="82.5" width="8" height="13" fill="#d4d4d4" stroke="#9c9c9c" stroke-width="1"/>
<rect x="631.5" y="95.5" width="8" height="13" fill="#fff" stroke="#9c9c9c" stroke-width="1"/>
<path d="M511.5 153V172.5L508 176" fill="none" stroke="#9c9c9c" stroke-width="1"/>
<path d="M512.5 166.5h5v15h-5z" fill="#fff" stroke="#9c9c9c"/>
<path d="M512.5 166.5l2.5 -2.5h5l-2.5 2.5z" fill="#eee" stroke="#9c9c9c"/>
<path d="M517.5 166.5l2.5 -2.5v15l-2.5 2.5z" fill="#fff" stroke="#9c9c9c"/>
<path d="M517.5 158.5h4v23h-4z" fill="#d4d4d4" stroke="#9c9c9c"/>
<path d="M517.5 158.5l2.5 -2.5h4l-2.5 2.5z" fill="#eee" stroke="#9c9c9c"/>
<path d="M521.5 158.5l2.5 -2.5v23l-2.5 2.5z" fill="#d4d4d4" stroke="#9c9c9c"/>
<path d="M525.5 160.5h5v21h-5z" fill="#fff" stroke="#9c9c9c"/>
<path d="M525.5 160.5l2.5 -2.5h5l-2.5 2.5z" fill="#eee" stroke="#9c9c9c"/>
<path d="M530.5 160.5l2.5 -2.5v21l-2.5 2.5z" fill="#fff" stroke="#9c9c9c"/>
<path d="M530.5 165.5h4v16h-4z" fill="#d4d4d4" stroke="#9c9c9c"/>
<path d="M530.5 165.5l2.5 -2.5h4l-2.5 2.5z" fill="#eee" stroke="#9c9c9c"/>
<path d="M534.5 165.5l2.5 -2.5v16l-2.5 2.5z" fill="#d4d4d4" stroke="#9c9c9c"/>
<path d="M565.5 153V172.5L562 176" fill="none" stroke="#9c9c9c" stroke-width="1"/>
<path d="M567.5 174.5h6v7h-6z" fill="#fff" stroke="#9c9c9c"/>
<path d="M567.5 174.5l2.5 -2.5h6l-2.5 2.5z" fill="#eee" stroke="#9c9c9c"/>
<path d="M573.5 174.5l2.5 -2.5v7l-2.5 2.5z" fill="#fff" stroke="#9c9c9c"/>
<path d="M567.5 162.5h6v12h-6z" fill="#d4d4d4" stroke="#9c9c9c"/>
<path d="M567.5 162.5l2.5 -2.5h6l-2.5 2.5z" fill="#eee" stroke="#9c9c9c"/>
<path d="M573.5 162.5l2.5 -2.5v12l-2.5 2.5z" fill="#d4d4d4" stroke="#9c9c9c"/>
<path d="M579.5 168.5h6v13h-6z" fill="#fff" stroke="#9c9c9c"/>
<path d="M579.5 168.5l2.5 -2.5h6l-2.5 2.5z" fill="#eee" stroke="#9c9c9c"/>
<path d="M585.5 168.5l2.5 -2.5v13l-2.5 2.5z" fill="#fff" stroke="#9c9c9c"/>
<path d="M579.5 157.5h6v11h-6z" fill="#d4d4d4" stroke="#9c9c9c"/>
<path d="M579.5 157.5l2.5 -2.5h6l-2.5 2.5z" fill="#eee" stroke="#9c9c9c"/>
<path d="M585.5 157.5l2.5 -2.5v11l-2.5 2.5z" fill="#d4d4d4" stroke="#9c9c9c"/>
<path d="M617.5 153V172.5L614 176" fill="none" stroke="#9c9c9c" stroke-width="1"/>
<path d="M619.5 174.5h6v7h-6z" fill="#fff" stroke="#9c9c9c"/>
<path d="M619.5 174.5l2.5 -2.5h6l-2.5 2.5z" fill="#eee" stroke="#9c9c9c"/>
<path d="M625.5 174.5l2.5 -2.5v7l-2.5 2.5z" fill="#fff" stroke="#9c9c9c"/>
<path d="M619.5 157.5h6v17h-6z" fill="#d4d4d4" stroke="#9c9c9c"/>
<path d="M619.5 157.5l2.5 -2.5h6l-2.5 2.5z" fill="#eee" stroke="#9c9c9c"/>
<path d="M625.5 157.5l2.5 -2.5v17l-2.5 2.5z" fill="#d4d4d4" stroke="#9c9c9c"/>
<path d="M631.5 168.5h6v13h-6z" fill="#fff" stroke="#9c9c9c"/>
<path d="M631.5 168.5l2.5 -2.5h6l-2.5 2.5z" fill="#eee" stroke="#9c9c9c"/>
<path d="M637.5 168.5l2.5 -2.5v13l-2.5 2.5z" fill="#fff" stroke="#9c9c9c"/>
<path d="M631.5 157.5h6v11h-6z" fill="#d4d4d4" stroke="#9c9c9c"/>
<path d="M631.5 157.5l2.5 -2.5h6l-2.5 2.5z" fill="#eee" stroke="#9c9c9c"/>
<path d="M637.5 157.5l2.5 -2.5v11l-2.5 2.5z" fill="#d4d4d4" stroke="#9c9c9c"/>
<path d="M668.5 153V172.5L665 176" fill="none" stroke="#9c9c9c" stroke-width="1"/>
<path d="M673.5 156.5h4v21h-4z" fill="#d4d4d4" stroke="#9c9c9c"/>
<path d="M673.5 156.5l2 -2h4l-2 2z" fill="#eee" stroke="#9c9c9c"/>
<path d="M677.5 156.5l2 -2v21l-2 2z" fill="#d4d4d4" stroke="#9c9c9c"/>
<path d="M687.5 156.5h4v21h-4z" fill="#d4d4d4" stroke="#9c9c9c"/>
<path d="M687.5 156.5l2 -2h4l-2 2z" fill="#eee" stroke="#9c9c9c"/>
<path d="M691.5 156.5l2 -2v21l-2 2z" fill="#d4d4d4" stroke="#9c9c9c"/>
<path d="M667.5 167.5h5v14h-5z" fill="#fff" stroke="#9c9c9c"/>
<path d="M667.5 167.5l2 -2h5l-2 2z" fill="#eee" stroke="#9c9c9c"/>
<path d="M672.5 167.5l2 -2v14l-2 2z" fill="#fff" stroke="#9c9c9c"/>
<path d="M681.5 161.5h5v20h-5z" fill="#fff" stroke="#9c9c9c"/>
<path d="M681.5 161.5l2 -2h5l-2 2z" fill="#eee" stroke="#9c9c9c"/>
<path d="M686.5 161.5l2 -2v20l-2 2z" fill="#fff" stroke="#9c9c9c"/>
<path d="M694 173l1.5 0" fill="none" stroke="#9c9c9c" stroke-width="1"/>
<path d="M507.5 226V253.5H537" fill="none" stroke="#9c9c9c" stroke-width="1"/>
<path d="M560.5 226V253.5H590" fill="none" stroke="#9c9c9c" stroke-width="1"/>
<path d="M612.5 226V253.5H642" fill="none" stroke="#9c9c9c" stroke-width="1"/>
<rect x="508.5" y="227.5" width="15" height="6" fill="#fff" stroke="#9c9c9c" stroke-width="1"/>
<rect x="508.5" y="233.5" width="22" height="6" fill="#d4d4d4" stroke="#9c9c9c" stroke-width="1"/>
<rect x="508.5" y="239.5" width="20" height="6" fill="#fff" stroke="#9c9c9c" stroke-width="1"/>
<rect x="508.5" y="245.5" width="14" height="6" fill="#d4d4d4" stroke="#9c9c9c" stroke-width="1"/>
<rect x="561.5" y="229.5" width="7" height="8" fill="#fff" stroke="#9c9c9c" stroke-width="1"/>
<rect x="568.5" y="229.5" width="13" height="8" fill="#d4d4d4" stroke="#9c9c9c" stroke-width="1"/>
<rect x="561.5" y="242.5" width="12" height="8" fill="#fff" stroke="#9c9c9c" stroke-width="1"/>
<rect x="573.5" y="242.5" width="13" height="8" fill="#d4d4d4" stroke="#9c9c9c" stroke-width="1"/>
<rect x="614.5" y="229.5" width="7" height="8" fill="#fff" stroke="#9c9c9c" stroke-width="1"/>
<rect x="621.5" y="229.5" width="18" height="8" fill="#d4d4d4" stroke="#9c9c9c" stroke-width="1"/>
<rect x="614.5" y="242.5" width="12" height="8" fill="#fff" stroke="#9c9c9c" stroke-width="1"/>
<rect x="626.5" y="242.5" width="13" height="8" fill="#d4d4d4" stroke="#9c9c9c" stroke-width="1"/>
<path d="M511.5 300V325.5H538M511.5 325.5L508 329" fill="none" stroke="#9c9c9c" stroke-width="1"/>
<path d="M509.5 319.5h15v5h-15z" fill="#d4d4d4" stroke="#9c9c9c"/>
<path d="M509.5 319.5l2 -2h15l-2 2z" fill="#eee" stroke="#9c9c9c"/>
<path d="M524.5 319.5l2 -2v5l-2 2z" fill="#d4d4d4" stroke="#9c9c9c"/>
<path d="M509.5 313.5h18v6h-18z" fill="#fff" stroke="#9c9c9c"/>
<path d="M509.5 313.5l2 -2h18l-2 2z" fill="#eee" stroke="#9c9c9c"/>
<path d="M527.5 313.5l2 -2v6l-2 2z" fill="#fff" stroke="#9c9c9c"/>
<path d="M509.5 306.5h20v6h-20z" fill="#d4d4d4" stroke="#9c9c9c"/>
<path d="M509.5 306.5l2 -2h20l-2 2z" fill="#eee" stroke="#9c9c9c"/>
<path d="M529.5 306.5l2 -2v6l-2 2z" fill="#d4d4d4" stroke="#9c9c9c"/>
<path d="M509.5 301.5h13v5h-13z" fill="#fff" stroke="#9c9c9c"/>
<path d="M509.5 301.5l2 -2h13l-2 2z" fill="#eee" stroke="#9c9c9c"/>
<path d="M522.5 301.5l2 -2v5l-2 2z" fill="#fff" stroke="#9c9c9c"/>
<path d="M565.5 298V301M565.5 322V325.5H590M565.5 325.5L562 328.5" fill="none" stroke="#9c9c9c" stroke-width="1"/>
<path d="M561.5 304.5h6v6h-6z" fill="#fff" stroke="#9c9c9c"/>
<path d="M561.5 304.5l3 -3h6l-3 3z" fill="#eee" stroke="#9c9c9c"/>
<path d="M567.5 304.5l3 -3v6l-3 3z" fill="#fff" stroke="#9c9c9c"/>
<path d="M567.5 304.5h6v6h-6z" fill="#d4d4d4" stroke="#9c9c9c"/>
<path d="M567.5 304.5l3 -3h6l-3 3z" fill="#eee" stroke="#9c9c9c"/>
<path d="M573.5 304.5l3 -3v6l-3 3z" fill="#d4d4d4" stroke="#9c9c9c"/>
<path d="M561.5 316.5h12v6h-12z" fill="#fff" stroke="#9c9c9c"/>
<path d="M561.5 316.5l3 -3h12l-3 3z" fill="#eee" stroke="#9c9c9c"/>
<path d="M573.5 316.5l3 -3v6l-3 3z" fill="#fff" stroke="#9c9c9c"/>
<path d="M497 339.5H706" fill="none" stroke="#dadada" stroke-width="1"/>
<path d="M502 346V356.5H514" fill="none" stroke="#777" stroke-width="1"/>
<path d="M503.5 356V349M506.5 356V351M509.5 356V347M512.5 356V350" stroke="#999" stroke-width="2"/>
</svg>
<div class="a" style="left:523px;top:345px;font-size:11px;line-height:14px;color:#444">More Column Charts...</div>
<div class="a" style="left:523.5px;top:357px;width:11px;height:1px;background:#444"></div>
<div class="a" style="left:571px;top:256px;width:196px;height:154px;background:#fff;border:1px solid #c6c6c6;box-shadow:1px 1px 2px rgba(0,0,0,0.15)"></div>
<div class="a" style="left:580px;top:262px;font-size:10.8px;line-height:14px;font-weight:bold;color:#444">Stacked Bar</div>
<div class="a" style="left:580px;top:281.5px;font-size:11.15px;line-height:15px;color:#585858">Use this chart type to:<br>• Compare parts of a whole across<br>categories.<br>• Show how parts of a whole<br>change over time<br>&nbsp;<br>Use it when:<br>• The category text is long.</div>
<!--/PANEL-->
</body></html>
